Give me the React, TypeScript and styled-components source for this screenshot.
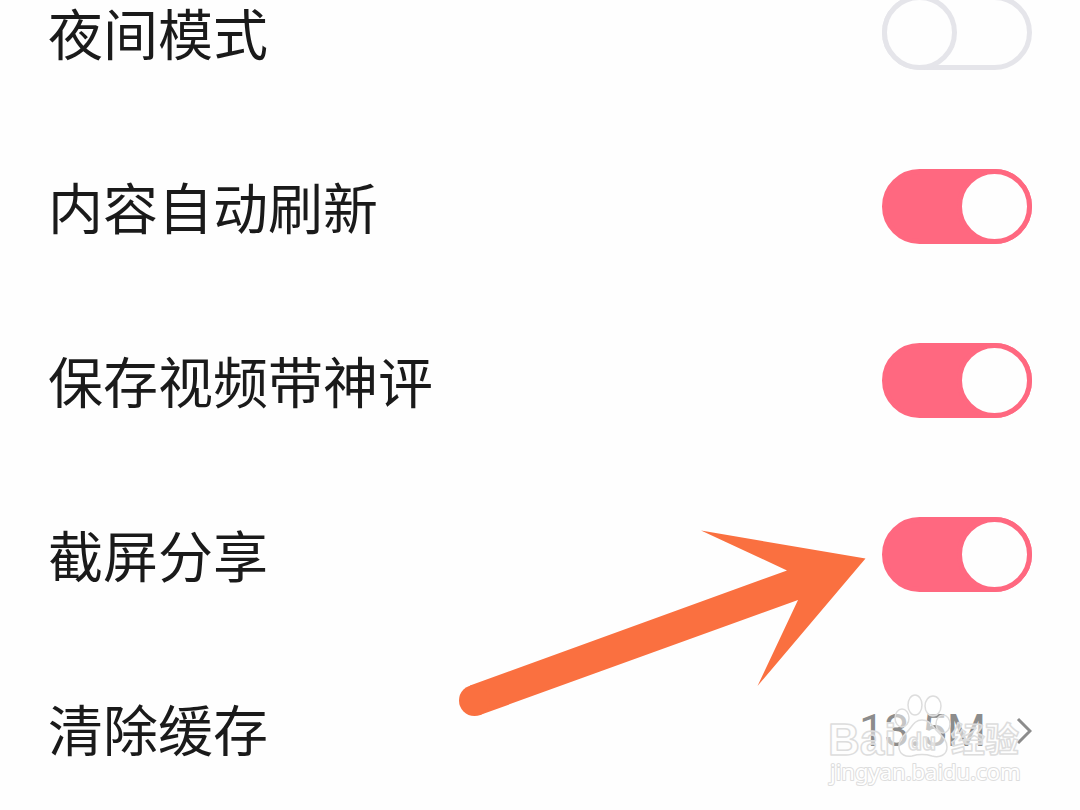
import { useState } from "react";
import styled, { createGlobalStyle } from "styled-components";

const GlobalStyle = createGlobalStyle`
  *, *::before, *::after { box-sizing: border-box; }
  body {
    margin: 0;
    overflow: hidden;
    background: #fefefe;
    color: #1a1a1a;
    font-family: Roboto, "Noto Sans CJK SC", sans-serif;
  }
`;

const Screen = styled.main`
  height: 100vh;
  overflow: hidden;
`;

/* The list is scrolled a little, so its first row is cut by the top edge. */
const List = styled.ul`
  list-style: none;
  margin: -55px 0 0;
  padding: 0;
`;

const Row = styled.li`
  position: relative;
  display: flex;
  align-items: center;
  justify-content: space-between;
  height: 174px;
  padding: 0 48px;
`;

const Label = styled.label`
  padding-bottom: 2px;
  font-family: "Noto Sans CJK SC", sans-serif;
  font-size: 55px;
  line-height: 80px;
  white-space: nowrap;
`;

const Switch = styled.input`
  appearance: none;
  flex: none;
  width: 150px;
  height: 75px;
  margin: 0;
  border: 5px solid #e5e5ea;
  border-radius: 38px;
  background: #fefefe;
  cursor: pointer;

  &::before {
    content: "";
    display: block;
    width: 75px;
    height: 75px;
    margin: -5px;
    border: 5px solid #e5e5ea;
    border-radius: 50%;
    background: #fefefe;
  }

  &:checked {
    border-color: #ff6880;
    background: #ff6880;
  }

  &:checked::before {
    margin-left: 70px;
    border-color: #ff6880;
  }
`;

const CacheButton = styled.button`
  display: flex;
  align-items: center;
  gap: 30px;
  padding: 6px 0 0;
  border: 0;
  background: none;
  color: #8c8c8c;
  font-family: Roboto, sans-serif;
  font-size: 45px;
  line-height: 56px;
  cursor: pointer;
`;

const Arrow = styled.svg`
  position: absolute;
  right: 214px;
  top: 62px;
  pointer-events: none;
  z-index: 1;
`;

const Watermark = styled.svg`
  position: absolute;
  right: 54px;
  top: 48px;
  pointer-events: none;
`;

type ToggleRowProps = { id: string; label: string; on: boolean; pointed?: boolean };

function ToggleRow({ id, label, on, pointed }: ToggleRowProps) {
  const [checked, setChecked] = useState(on);
  return (
    <Row>
      <Label htmlFor={id}>{label}</Label>
      <Switch
        id={id}
        type="checkbox"
        role="switch"
        checked={checked}
        onChange={(e) => setChecked(e.target.checked)}
      />
      {pointed && <PointerArrow />}
    </Row>
  );
}

function PointerArrow() {
  return (
    <Arrow width="408" height="190" viewBox="458 529 408 190" fill="#fa7040" aria-hidden="true">
      <path d="M701 530.500 L865.500 558.500 L757.500 686 L798 600 L480 715 L470 685.500 L787 570.500 Z" />
      <circle cx="474.500" cy="700.500" r="15.500" />
    </Arrow>
  );
}

function BaiduWatermark() {
  return (
    <Watermark width="204" height="104" viewBox="822 689 204 104" aria-hidden="true">
      <g
        fill="#fff"
        fillOpacity="0.5"
        stroke="#dddddd"
        strokeWidth="1.500"
        strokeLinejoin="round"
      >
        <ellipse cx="902" cy="718" rx="7" ry="9" />
        <ellipse cx="915" cy="705" rx="7" ry="10" />
        <ellipse cx="933" cy="706" rx="8" ry="10" />
        <ellipse cx="943" cy="724" rx="7" ry="9" />
        <path d="M922 720 C914 720 912 727 907 732 C902 737 898 741 899 748 C900 755 906 757 912 756 C919 754 925 754 932 756 C940 758 947 755 947 747 C947 740 942 736 937 731 C932 726 930 720 922 720 Z" />
        <text x="828" y="755" fontFamily="Liberation Sans" fontWeight="700" fontSize="44">Bai</text>
        <text x="951" y="752" fontFamily="Noto Sans CJK SC" fontWeight="700" fontSize="34">经验</text>
        <text x="908" y="750" fontFamily="Liberation Sans" fontWeight="700" fontSize="23">du</text>
        <text x="830" y="780" fontFamily="Noto Sans" fontSize="22" fillOpacity="1" strokeWidth="2" paintOrder="stroke">jingyan.baidu.com</text>
      </g>
    </Watermark>
  );
}

export default function App() {
  return (
    <Screen>
      <GlobalStyle />
      <List>
        <ToggleRow id="night" label="夜间模式" on={false} />
        <ToggleRow id="refresh" label="内容自动刷新" on />
        <ToggleRow id="comments" label="保存视频带神评" on />
        <ToggleRow id="share" label="截屏分享" on pointed />
        <Row>
          <Label htmlFor="cache">清除缓存</Label>
          <CacheButton id="cache" type="button">
            13.5M
            <svg width="16" height="28" viewBox="0 0 16 28" fill="none" stroke="#8c8c8c" strokeWidth="3" aria-hidden="true">
              <path d="M2 2 L14 14 L2 26" />
            </svg>
          </CacheButton>
          <BaiduWatermark />
        </Row>
      </List>
    </Screen>
  );
}
